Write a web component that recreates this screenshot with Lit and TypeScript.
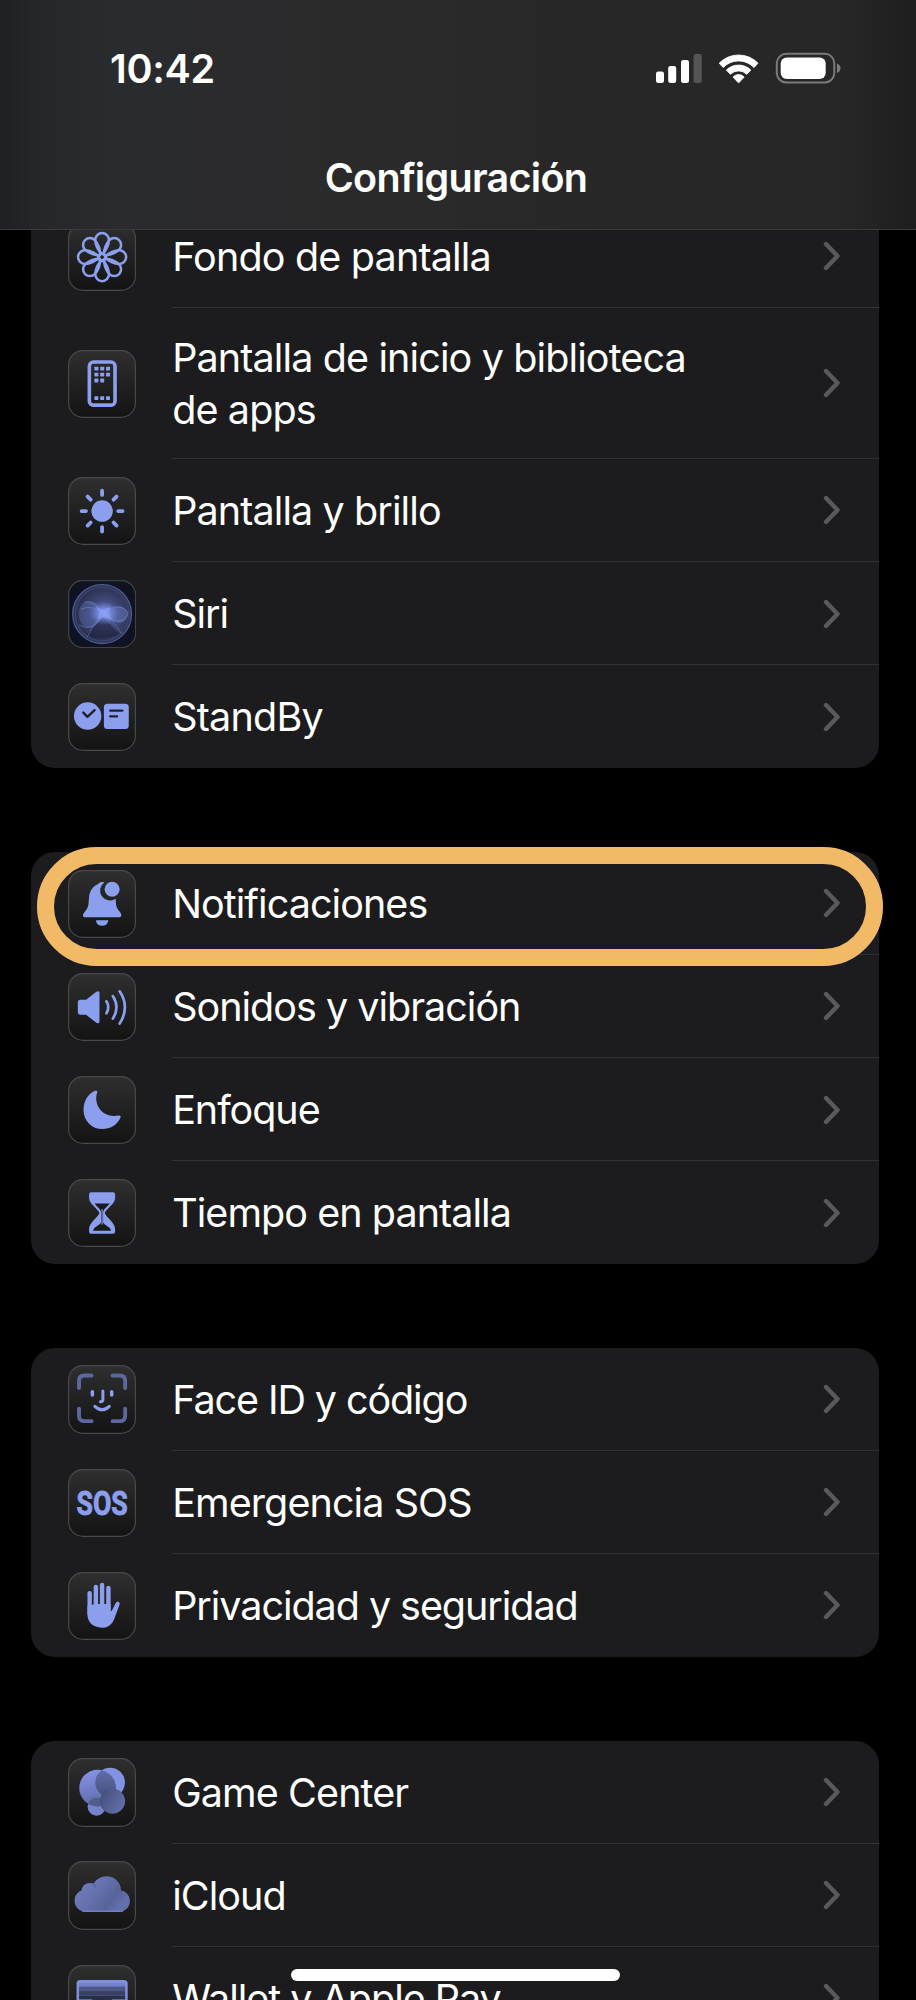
import { LitElement, html, svg, css } from "lit";
import { customElement } from "lit/decorators.js";
import { styleMap } from "lit/directives/style-map.js";

const BLUE = "#8b9fee";

const icons: Record<string, unknown> = {
  wallpaper: svg`
    <g fill="none" stroke=${BLUE} stroke-width="2.500">
      ${[0, 45, 90, 135, 180, 225, 270, 315].map(
        (a) => svg`<path transform="rotate(${a} 34 34)" d="M34 31C29.800 28 27.200 21.500 27.200 16.800A6.800 6.800 0 0 1 40.800 16.800C40.800 21.500 38.200 28 34 31Z"/>`
      )}
      <circle cx="34" cy="34" r="3.600"/>
    </g>`,
  home: svg`
    <rect x="21.300" y="12" width="25.600" height="43" rx="4" fill="none" stroke=${BLUE} stroke-width="3.600"/>
    <g fill=${BLUE}>
      ${[[26.3,16.6],[32.1,16.6],[37.9,16.6],[26.3,22.6],[32.1,22.6],[37.9,22.6],[26.3,28.5],[32.1,28.5],[26.3,46],[32.1,46],[37.9,46]].map(
        ([x, y]) => svg`<rect x=${x} y=${y} width="4" height="3.8" rx=".6"/>`
      )}
    </g>`,
  sun: svg`
    <circle cx="34" cy="34" r="10.700" fill=${BLUE}/>
    <g stroke=${BLUE} stroke-width="3.800" stroke-linecap="round">
      ${[0, 45, 90, 135, 180, 225, 270, 315].map(
        (a) => svg`<path transform="rotate(${a} 34 34)" d="M34 13.6v4.3"/>`
      )}
    </g>`,
  siri: svg`
    <defs>
      <radialGradient id="corner" cx=".5" cy=".5" r=".7"><stop offset=".6" stop-color="#0e1328"/><stop offset="1" stop-color="#101117"/></radialGradient>
      <radialGradient id="orb" cx=".55" cy=".5" r=".58"><stop offset="0" stop-color="#6577c2"/><stop offset=".35" stop-color="#434d80"/><stop offset=".8" stop-color="#2c324f"/><stop offset="1" stop-color="#2c3354"/></radialGradient>
      <radialGradient id="core"><stop offset="0" stop-color="#8da1f7"/><stop offset=".3" stop-color="#8297ee" stop-opacity=".8"/><stop offset="1" stop-color="#7286dc" stop-opacity="0"/></radialGradient>
    </defs>
    <rect x=".6" y=".6" width="66.800" height="66.800" rx="14.400" fill="url(#corner)" stroke="#414144" stroke-width="1.200"/>
    <circle cx="34" cy="34" r="29.300" fill="url(#orb)" stroke="#4e5c94" stroke-width="1.300"/>
    <circle cx="34" cy="34" r="26.800" fill="none" stroke="#39426a" stroke-width="1.600"/>
    <path d="M35 32C28 17 12 17 10.500 34C12 51 27 53 35 35Z" fill="#5f70b4" opacity=".38"/>
    <path d="M37 34C43 24 58 24 60 34C58 46 46 45 37 35Z" fill="#6b7dc4" opacity=".45"/>
    <path d="M35 37L18 55Q34 62 51 54Z" fill="#171b30" opacity=".5"/>
    <g fill="none" stroke="#8294df" stroke-width=".9" opacity=".5">
      <path d="M17 22Q27 21 35 33"/><path d="M13 29Q24 24 36 34"/><path d="M39 34L54 54"/><path d="M33 36Q24 46 19 57"/><path d="M38 32C44 25 56 25 60 33C57 43 46 43 39 35"/><path d="M11 45Q24 52 33 38"/>
    </g>
    <ellipse cx="36" cy="33" rx="15" ry="12" fill="url(#core)"/>
    <path d="M28 27L35 29.500L42 27L40.500 33L44 40L36 37L29 39L31.500 33Z" fill="#8ea2fa" opacity=".6"/>`,
  standby: svg`
    <circle cx="19.600" cy="33" r="13.700" fill=${BLUE}/>
    <path d="M15.300 29.500L19.400 33.700L26.500 27" fill="none" stroke="#22232a" stroke-width="2.400" stroke-linecap="round" stroke-linejoin="round"/>
    <rect x="35.800" y="20.800" width="24.800" height="25" rx="3.500" fill=${BLUE}/>
    <path d="M42 27.500h12.300M42 33.300h7" stroke="#22232a" stroke-width="2.200" stroke-linecap="round"/>`,
  bell: svg`
    <path d="M30.400 13.600C31.500 12 34.400 11.600 36.200 12.400A9.800 9.800 0 0 0 47.600 28.600C47.800 36 48.300 37.800 51.500 41.300C52.800 43 53.200 44.200 53.200 45.400Q53.200 47.200 51 47.200H17Q14.900 47.200 14.900 45.400C14.900 44.200 15.600 43 17 41.300C20.300 37.500 20.500 35.500 20.900 27.500C21.500 20 25.500 15.700 30.400 13.600Z" fill=${BLUE}/>
    <circle cx="44" cy="19.200" r="7.500" fill=${BLUE}/>
    <path d="M27.800 50H40.300Q39.200 55.700 34 55.700T27.800 50Z" fill=${BLUE}/>`,
  sound: svg`
    <path d="M12.500 26.800H18L28.300 18.800Q31.400 17.200 31.400 20.200V48Q31.400 51 28.300 49.500L18 41.700H12.500Q9.800 41.700 9.800 39V29.500Q9.800 26.800 12.500 26.800Z" fill=${BLUE}/>
    <g fill="none" stroke=${BLUE} stroke-width="2.700" stroke-linecap="round"><path d="M38.300 28.200Q42 34 38.300 40.200"/><path d="M44.700 23Q52 34 44.700 45.500"/><path d="M51.500 18.300Q62 34 51.500 50.500"/></g>`,
  moon: svg`<path d="M27 14.800C28.800 14.200 29.700 15 29 16.700C25 29.500 35.500 42.500 50.500 39.400C52.300 39 53 40 52.300 41.700C48.500 49.500 42 52.900 34.500 52.900C23.500 52.900 15.500 44.500 15.500 33.800C15.500 25 20 17.800 27 14.800Z" fill=${BLUE}/>`,
  hourglass: svg`
    <path d="M23.200 13.200H44.800Q47 13.200 47 15.500V19C47 25 38 29.500 36.700 34C38 38.500 47 43.500 47 50V52.300Q47 54.700 44.800 54.700H23.200Q21 54.700 21 52.300V50C21 43.500 30 38.500 31.300 34C30 29.500 21 25 21 19V15.500Q21 13.200 23.200 13.200Z" fill=${BLUE}/>
    <path d="M26.500 24.500H41.500C39 28 35.200 30 35 33.500V43.500C36.500 46.500 42 47.500 43 51.500H25C26 47.500 31.500 46.500 33 43.500V33.500C32.800 30 29 28 26.500 24.500Z" fill="#1a1a1b"/>
    <path d="M34 30V45.500" stroke=${BLUE} stroke-width="1.100"/>`,
  face: svg`
    <g fill="none" stroke="#5b679f" stroke-width="3.900" stroke-linecap="round">
      <path d="M11 23V16Q11 10.500 16.500 10.500H23.500M44.500 10.500H51.500Q57 10.500 57 16V23M57 43.500V50.500Q57 56 51.500 56H44.500M23.500 56H16.500Q11 56 11 50.500V43.500"/>
    </g>
    <g fill="none" stroke=${BLUE} stroke-width="3.500" stroke-linecap="round"><path d="M24.300 26.600v3.400M43.600 26.600v3.400"/><path d="M34.800 26V34.300Q34.800 36.600 32.300 36.600" stroke-width="3"/><path d="M26.800 41.200Q34 48 41.200 41.200" stroke-width="3"/></g>`,
  sos: svg`<text x="34" y="46.300" text-anchor="middle" textLength="51" lengthAdjust="spacingAndGlyphs" class="sos" fill=${BLUE} stroke=${BLUE} stroke-width=".9">SOS</text>`,
  hand: svg`
    <g stroke=${BLUE} stroke-width="4.400" stroke-linecap="round" fill="none"><path d="M21.600 21.200V42"/><path d="M27.800 15V38"/><path d="M34 13V38"/><path d="M40.300 16V38"/></g>
    <path d="M19.400 34L27 32H42.500V39C43.300 39 43.800 38.500 44.300 37.300L47.300 31.500Q48.800 28.800 50.700 29.800Q52.200 30.700 51.300 33L46.200 46.500C43.700 52.700 40 55.500 33.700 55.500C25 55.500 19.400 50.500 19.400 42Z" fill=${BLUE}/>`,
  game: svg`
    <defs><linearGradient id="ga" x1=".4" y1="0" x2=".6" y2="1"><stop stop-color="#8494e4"/><stop offset="1" stop-color="#5c69a6"/></linearGradient>
    <linearGradient id="gb" x1="0" y1=".5" x2="1" y2="1"><stop stop-color="#48517f"/><stop offset="1" stop-color="#6875b5"/></linearGradient>
    <linearGradient id="gd" x1="0" y1="0" x2="0" y2="1"><stop stop-color="#6471b0"/><stop offset="1" stop-color="#454e79"/></linearGradient>
    <clipPath id="gc"><circle cx="29.500" cy="30" r="18.300"/></clipPath></defs>
    <circle cx="28.500" cy="48.500" r="9" fill="#7484cc"/>
    <circle cx="42" cy="24.500" r="14.800" fill="#8293e3"/>
    <circle cx="29.500" cy="30" r="18.300" fill="url(#ga)"/>
    <g clip-path="url(#gc)"><circle cx="42" cy="24.500" r="14.800" fill="url(#gd)"/><circle cx="28.500" cy="48.500" r="9" fill="#525c8d"/></g>
    <circle cx="44.300" cy="43" r="12.600" fill="url(#gb)"/>`,
  cloud: svg`
    <defs><linearGradient id="cl" x1="0" y1="0" x2="1" y2=".5"><stop stop-color="#7383ca"/><stop offset=".5" stop-color="#6471ac"/><stop offset=".8" stop-color="#58639a"/><stop offset="1" stop-color="#6370b0"/></linearGradient></defs>
    <path d="M17.500 50.500C11 50.500 6.600 45.500 6.600 39.700C6.600 34.500 9.500 30.800 13.500 29.500C14 23.500 19.500 20.500 25.500 22.500C28.500 18 33 15.200 38.500 15.200C46.500 15.200 52.500 21 53 29.500C58.500 30.500 61.700 34.800 61.700 40C61.700 46 57.200 50.500 51.500 50.500Z" fill="url(#cl)"/>
    <path d="M25.500 22.500Q27.500 24.500 27.500 27" fill="none" stroke="#515c91" stroke-width="1.500" opacity=".6"/>
    <path d="M14 50.200H55" stroke="#7d8ede" stroke-width="1"/>`,
  wallet: svg`
    <rect x="8.500" y="15" width="51" height="42" rx="3.500" fill="#7f90dc"/>
    <rect x="11" y="18" width="46" height="4" fill="#7483ca"/><rect x="11" y="21.500" width="46" height="4.500" fill="#4d5786"/><rect x="11" y="26" width="46" height="4.500" fill="#3a4165"/><rect x="11" y="30.500" width="46" height="4.500" fill="#2b3049"/>
    <path d="M11 33.800H24Q25 38 34 38T44 33.800H57V57H11Z" fill="#5c69a5"/>`,
};

interface Item { icon: string; lines: string[]; spacing: number }
const row = (icon: string, spacing: number, ...lines: string[]): Item => ({ icon, spacing, lines });

const groups: Item[][] = [
  [
    row("wallpaper", -0.83, "Fondo de pantalla"),
    row("home", -0.88, "Pantalla de inicio y biblioteca", "de apps"),
    row("sun", -0.9, "Pantalla y brillo"),
    row("siri", -1, "Siri"),
    row("standby", -0.76, "StandBy"),
  ],
  [
    row("bell", -0.94, "Notificaciones"),
    row("sound", -1, "Sonidos y vibración"),
    row("moon", -1.05, "Enfoque"),
    row("hourglass", -0.95, "Tiempo en pantalla"),
  ],
  [
    row("face", -1.1, "Face ID y código"),
    row("sos", -0.92, "Emergencia SOS"),
    row("hand", -1.05, "Privacidad y seguridad"),
  ],
  [
    row("game", -0.9, "Game Center"),
    row("cloud", -0.95, "iCloud"),
    row("wallet", -1.02, "Wallet y Apple Pay"),
  ],
];

@customElement("settings-row")
class SettingsRow extends LitElement {
  static properties = { item: { attribute: false } };
  declare item: Item;
  static styles = css`
    :host { display: flex; height: 103.100px; padding-left: 37.300px; }
    :host([tall]) { height: 150.900px; }
    .tile {
      align-self: center; flex: none; margin-top: .6px; width: 68.200px; height: 68.200px; box-sizing: border-box;
      border-radius: 15px; background: linear-gradient(#2f2f30, #131313); box-shadow: inset 0 0 0 1.200px #48484a;
    }
    .tile svg { display: block; width: 68.200px; height: 68.200px; }
    .sos { font: 700 33.500px Roboto, sans-serif; }
    .body { flex: 1; margin-left: 35.700px; display: flex; align-items: center; justify-content: space-between; box-sizing: border-box; border-bottom: 1.300px solid #323235; padding: 1px 38px 0 0; }
    :host([last]) .body { border-color: transparent; }
    .label { font: 380 39.500px/51.500px Inter, sans-serif; color: #fff; white-space: nowrap; padding-top: 2.600px; }
    .chev { width: 18px; height: 30px; display: block; }
  `;
  render() {
    const it = this.item;
    return html`
      <div class="tile"><svg viewBox="0 0 68 68">${icons[it.icon]}</svg></div>
      <div class="body">
        <div class="label" style=${styleMap({ letterSpacing: `${it.spacing}px` })}>${it.lines.map((l) => html`<div>${l}</div>`)}</div>
        <svg class="chev" viewBox="0 0 18 30"><path d="M3 3L14.500 15L3 27" fill="none" stroke="#59595d" stroke-width="4.400" stroke-linecap="round" stroke-linejoin="round"/></svg>
      </div>`;
  }
}

@customElement("app-root")
class AppRoot extends LitElement {
  static styles = css`
    :host { display: block; position: relative; width: 916px; height: 2000px; overflow: hidden; background: #000; font-family: Inter, sans-serif; }
    .header {
      position: relative; z-index: 2; height: 230px; box-sizing: border-box; border-bottom: 1.200px solid #3a3a3c; color: #fff;
      background: linear-gradient(90deg, #1f2021 0, #25272a 40px, #292b2f 110px, #2b2b2d 230px, #2a2a2b 400px, #272728 600px, #272728 840px, #1e1e1f 916px);
    }
    .status { display: flex; height: 136px; align-items: center; justify-content: space-between; padding: 0 75px 0 110px; }
    .time { font: 590 39.500px/48px Inter, sans-serif; letter-spacing: -.3px; padding-top: 2px; }
    .glyphs { display: block; width: 190px; height: 40px; }
    .title { font: 580 39.500px/48px Inter, sans-serif; text-align: center; margin-top: 18px; letter-spacing: -.7px; padding-right: 4px; }
    .list { display: flex; flex-direction: column; gap: 83.600px; margin: -25.100px 37px 0 31px; }
    .group { background: #1c1c1e; border-radius: 24px; overflow: hidden; flex: none; }
    .highlight { position: absolute; z-index: 3; left: 37px; top: 847px; width: 846px; height: 119px; box-sizing: border-box; border: 17.500px solid #f2ba66; border-radius: 60px; }
    .home { position: absolute; z-index: 3; left: 291px; top: 1969px; width: 329px; height: 12px; border-radius: 6px; background: #fff; }
  `;
  render() {
    return html`
      <div class="header">
        <div class="status">
          <span class="time">10:42</span>
          <svg class="glyphs" viewBox="0 0 190 40">
            <g fill="#fff"><rect x="5" y="23.500" width="8" height="11.500" rx="2.300"/><rect x="17.200" y="18" width="8" height="17" rx="2.300"/><rect x="30" y="12" width="8" height="23" rx="2.300"/></g>
            <rect x="42.500" y="6" width="8.300" height="29" rx="2.300" fill="#555556"/>
            <path d="M68.200 15.200A27 27 0 0 1 107 15.200L103 19.600A21 21 0 0 0 72.200 19.600ZM75.300 22.100A17.500 17.500 0 0 1 99.900 22.100L95.800 26.300A11.700 11.700 0 0 0 79.400 26.300ZM82 29A7.500 7.500 0 0 1 93.200 29L87.600 35Z" fill="#fff" stroke="#fff" stroke-width=".8" stroke-linejoin="round"/>
            <rect x="125.800" y="5.800" width="57.500" height="28.800" rx="9.500" fill="none" stroke="#7b7b7d" stroke-width="2"/>
            <rect x="129.700" y="9.600" width="45" height="21.300" rx="6" fill="#fff"/>
            <path d="M186 15.500Q189.500 17 189.500 20.200T186 25Z" fill="#7b7b7d"/>
          </svg>
        </div>
        <div class="title">Configuración</div>
      </div>
      <div class="list">
        ${groups.map((g) => html`<div class="group">${g.map((it, i) => html`<settings-row .item=${it} ?tall=${it.lines.length > 1} ?last=${i === g.length - 1}></settings-row>`)}</div>`)}
      </div>
      <div class="highlight"></div>
      <div class="home"></div>`;
  }
}
